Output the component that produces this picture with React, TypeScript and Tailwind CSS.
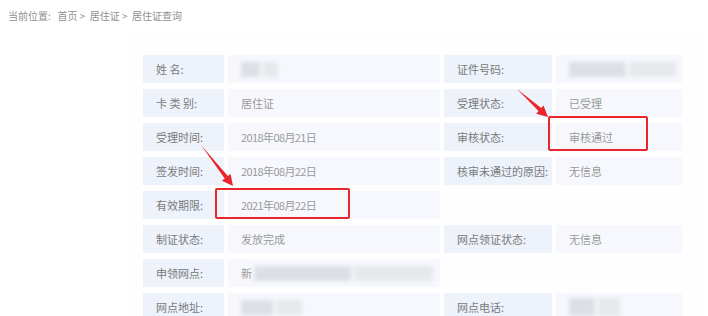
const font = { fontFamily: '"Microsoft YaHei", "Noto Sans CJK SC", sans-serif' };

function Label({ text }: { text: string }) {
	return (
		<div className="h-[28px] flex items-center pl-[13px] bg-[#edf2fb] text-[11px] text-[#7a7a7a]">
			{text}
		</div>
	);
}

function Value({ children, date }: { children?: React.ReactNode; date?: boolean }) {
	return (
		<div className={`h-[28px] flex items-center pl-[13px] bg-[#f6f8fd] text-[11px] text-[#9a9a9a] overflow-hidden ${date ? "tracking-[-0.6px]" : ""}`}>
			{children}
		</div>
	);
}

function Blur({ w, h = 15 }: { w: number; h?: number }) {
	return (
		<div className="flex gap-[3px] blur-[2px]">
			<div className="bg-[#dcdfe4]" style={{ width: w * 0.55, height: h }}></div>
			<div className="bg-[#e6e8ec]" style={{ width: w * 0.45, height: h }}></div>
		</div>
	);
}

function arrowPoints(tx: number, ty: number, hx: number, hy: number) {
	const dx = hx - tx, dy = hy - ty;
	const len = Math.hypot(dx, dy);
	const ux = dx / len, uy = dy / len;
	const nx = -uy, ny = ux;
	const bx = hx - ux * 11, by = hy - uy * 11;
	const p = [
		[tx, ty],
		[bx + nx * 2, by + ny * 2],
		[bx + nx * 5.5, by + ny * 5.5],
		[hx, hy],
		[bx - nx * 5.5, by - ny * 5.5],
		[bx - nx * 2, by - ny * 2],
	];
	return p.map(([x, y]) => `${x.toFixed(1)},${y.toFixed(1)}`).join(" ");
}

export default function App() {
	return (
		<div className="relative w-[708px] h-[316px] overflow-hidden bg-white" style={font}>
			<div className="h-[33px] pl-[8px] pt-[9px] text-[10px] text-[#909090] leading-[14px]">
				当前位置:&nbsp;&nbsp; 首页 &gt;&nbsp; 居住证 &gt;&nbsp; 居住证查询
			</div>
			<div className="ml-[127px] w-[573px] h-[290px] bg-[#fefeff] pt-[22px] pl-[16px]">
				<div className="grid grid-cols-[81px_212px_108px_126px] gap-x-[4px] gap-y-[6px]">
					<Label text="姓 名:" />
					<Value><Blur w={34} /></Value>
					<Label text="证件号码:" />
					<Value><Blur w={104} /></Value>

					<Label text="卡 类 别:" />
					<Value>居住证</Value>
					<Label text="受理状态:" />
					<Value>已受理</Value>

					<Label text="受理时间:" />
					<Value date>2018年08月21日</Value>
					<Label text="审核状态:" />
					<Value>审核通过</Value>

					<Label text="签发时间:" />
					<Value date>2018年08月22日</Value>
					<Label text="核审未通过的原因:" />
					<Value>无信息</Value>

					<Label text="有效期限:" />
					<Value date>2021年08月22日</Value>
					<div></div>
					<div></div>

					<Label text="制证状态:" />
					<Value>发放完成</Value>
					<Label text="网点领证状态:" />
					<Value>无信息</Value>

					<Label text="申领网点:" />
					<Value>
						<span className="mr-[2px]">新</span>
						<Blur w={176} />
					</Value>
					<div></div>
					<div></div>

					<Label text="网点地址:" />
					<Value><Blur w={58} /></Value>
					<Label text="网点电话:" />
					<Value><Blur w={48} h={18} /></Value>
				</div>
			</div>

			<div className="absolute left-[548px] top-[116px] w-[100px] h-[35px] border-2 border-[#e8262b] rounded-[2px]"></div>
			<div className="absolute left-[215px] top-[188px] w-[135px] h-[31px] border-2 border-[#e8262b] rounded-[2px]"></div>
			<svg className="absolute left-0 top-0 pointer-events-none" width="708" height="316">
				<polygon points={arrowPoints(517, 89, 548, 117)} fill="#e8262b" />
				<polygon points={arrowPoints(201, 145, 233, 186)} fill="#e8262b" />
			</svg>
		</div>
	);
}
